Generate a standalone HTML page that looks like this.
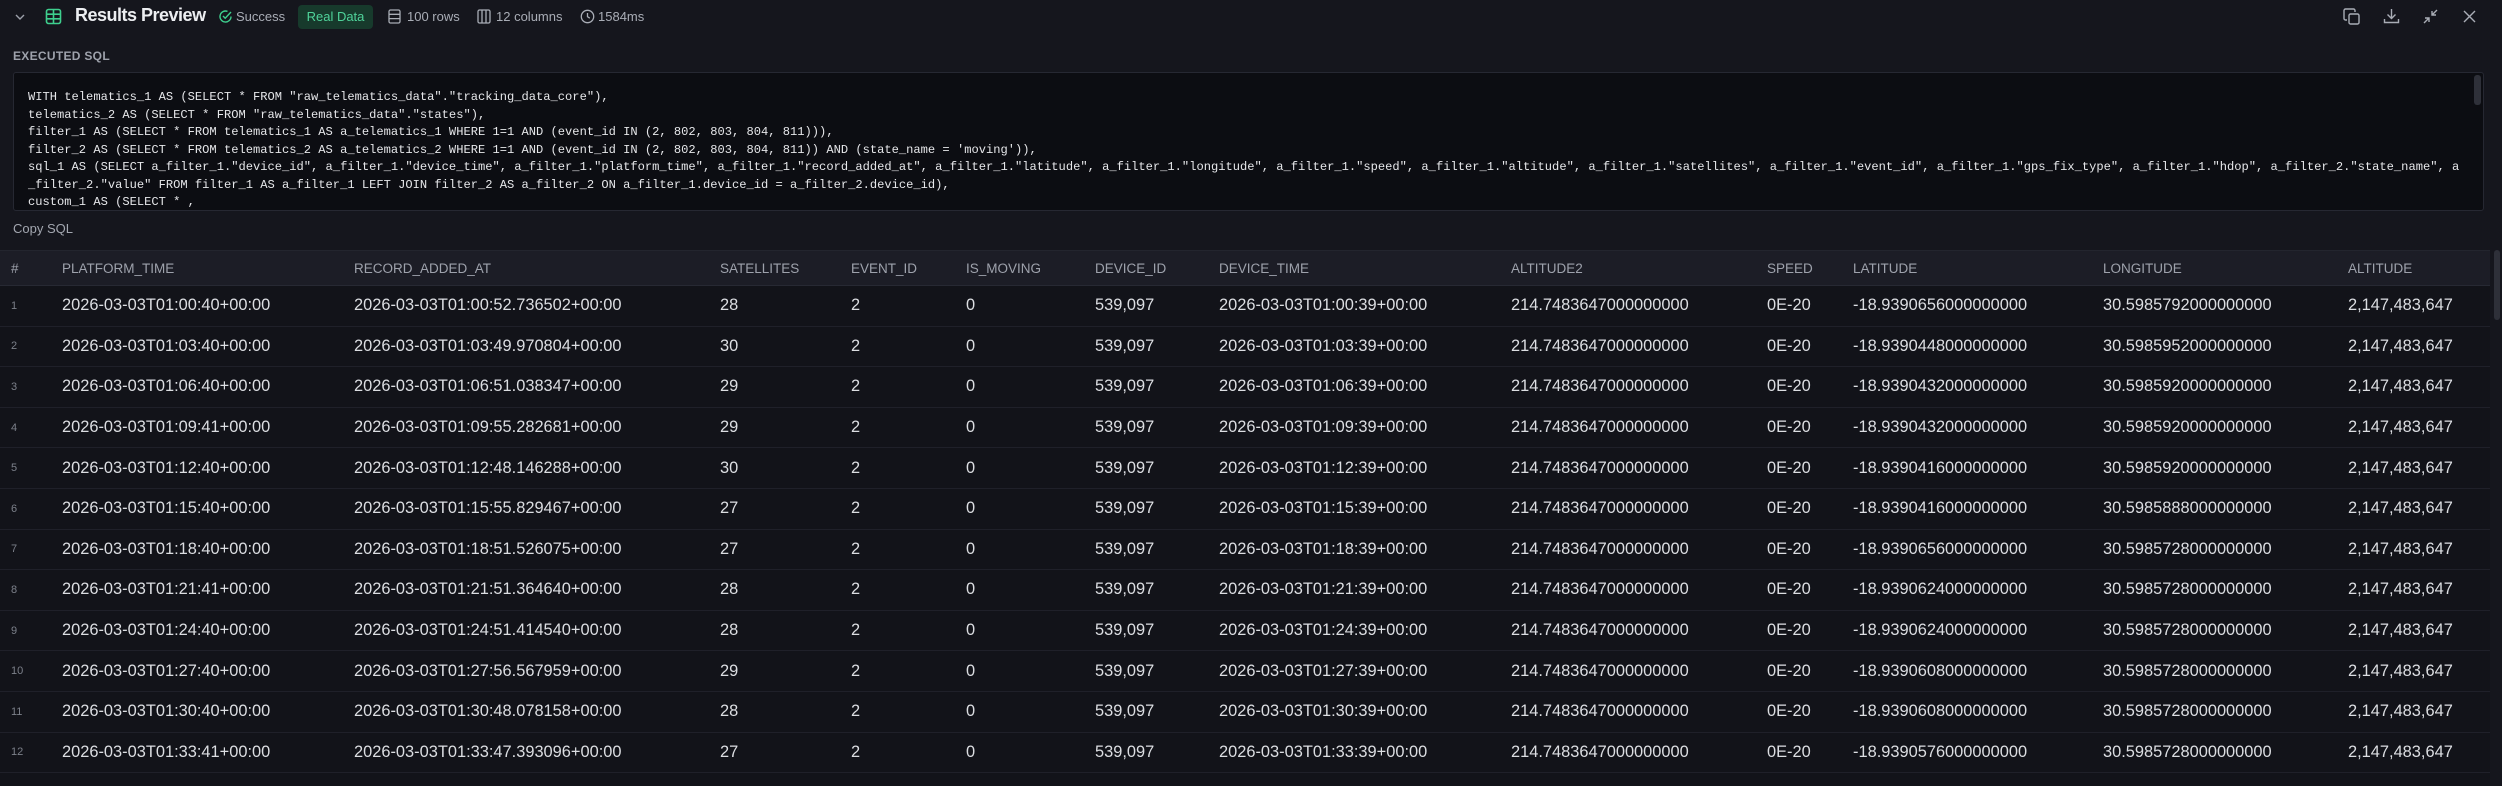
<!DOCTYPE html>
<html><head><meta charset="utf-8"><style>
*{box-sizing:border-box;margin:0;padding:0}
body{width:2502px;height:786px;background:#15161d;color:#d9dbe0;font-family:"Liberation Sans",sans-serif;overflow:hidden;position:relative}
.a{position:absolute;white-space:nowrap}
.hdr{font-size:13px;color:#a9adb6;top:8px;line-height:17px}
svg{position:absolute}
.sql{position:absolute;left:13px;top:72px;width:2471px;height:139px;background:#0c0d12;border:1px solid #262832;border-radius:3px}
.sql pre{position:absolute;left:14px;top:16px;font-family:"Liberation Mono",monospace;font-size:12.1px;line-height:17.5px;color:#e6e7ea}
table{position:absolute;left:0;top:250px;width:2490px;border-collapse:collapse;table-layout:fixed;font-size:16.4px}
th{height:35px;background:#1c1d26;text-align:left;font-weight:normal;color:#9ea2ac;font-size:13.5px;border-bottom:1px solid #272933;border-top:1px solid #23252e}
td{height:40.6px;background:#121319;border-bottom:1px solid #1f2029;color:#dcdee2;white-space:nowrap}
th:first-child,td:first-child{padding-left:11px}
td:first-child{font-size:11px;color:#7c808a}
</style></head><body>
<svg style="left:14px;top:11px" width="12" height="12" viewBox="0 0 12 12"><path d="M2 4l4 4 4-4" stroke="#9ca0aa" stroke-width="1.4" fill="none"/></svg>
<svg style="left:45px;top:8px" width="17" height="17" viewBox="0 0 17 17"><rect x="1.5" y="1.5" width="14" height="14" rx="2" stroke="#3ecf8e" stroke-width="1.6" fill="none"/><path d="M1.5 6.2h14M1.5 10.8h14M8.5 1.5v14" stroke="#3ecf8e" stroke-width="1.6"/></svg>
<div class="a" style="left:75px;top:5px;font-size:18px;font-weight:bold;color:#eceef1;letter-spacing:-0.5px">Results Preview</div>
<svg style="left:218px;top:9px" width="15" height="15" viewBox="0 0 15 15"><path d="M13 7.5A5.5 5.5 0 1 1 9.5 2.4" stroke="#3ecf8e" stroke-width="1.4" fill="none"/><path d="M5 7l2.2 2.2L13 3" stroke="#3ecf8e" stroke-width="1.4" fill="none"/></svg>
<div class="a hdr" style="left:236px">Success</div>
<div class="a" style="left:298px;top:5px;width:75px;height:24px;background:#173a2c;border-radius:4px;color:#4fd39a;font-size:13px;line-height:24px;text-align:center">Real Data</div>
<svg style="left:388px;top:9px" width="13" height="15" viewBox="0 0 13 15"><rect x="1" y="1" width="11" height="13" rx="1.5" stroke="#a9adb6" stroke-width="1.3" fill="none"/><path d="M1 5.3h11M1 9.6h11" stroke="#a9adb6" stroke-width="1.3"/></svg>
<div class="a hdr" style="left:407px">100 rows</div>
<svg style="left:477px;top:9px" width="14" height="15" viewBox="0 0 14 15"><rect x="1" y="1" width="12" height="13" rx="1.5" stroke="#a9adb6" stroke-width="1.3" fill="none"/><path d="M5 1v13M9 1v13" stroke="#a9adb6" stroke-width="1.3"/></svg>
<div class="a hdr" style="left:496px">12 columns</div>
<svg style="left:580px;top:9px" width="15" height="15" viewBox="0 0 15 15"><circle cx="7.5" cy="7.5" r="6.2" stroke="#a9adb6" stroke-width="1.3" fill="none"/><path d="M7.5 4v3.7l2.3 1.5" stroke="#a9adb6" stroke-width="1.3" fill="none"/></svg>
<div class="a hdr" style="left:598px">1584ms</div>
<svg style="left:2343px;top:8px" width="17" height="17" viewBox="0 0 17 17"><rect x="6" y="6" width="10" height="10" rx="1.5" stroke="#a9adb6" stroke-width="1.4" fill="none"/><path d="M4 12H2.5A1.5 1.5 0 0 1 1 10.5v-8A1.5 1.5 0 0 1 2.5 1h8A1.5 1.5 0 0 1 12 2.5V4" stroke="#a9adb6" stroke-width="1.4" fill="none"/></svg>
<svg style="left:2383px;top:8px" width="17" height="17" viewBox="0 0 17 17"><path d="M8.5 1v9M4.5 6.5l4 4 4-4M1.5 11v3.5h14V11" stroke="#a9adb6" stroke-width="1.4" fill="none"/></svg>
<svg style="left:2422px;top:8px" width="17" height="17" viewBox="0 0 17 17"><path d="M15 2l-5 5M10 3v4h4M2 15l5-5M3 10h4v4" stroke="#a9adb6" stroke-width="1.4" fill="none"/></svg>
<svg style="left:2462px;top:9px" width="15" height="15" viewBox="0 0 15 15"><path d="M2 2l11 11M13 2L2 13" stroke="#a9adb6" stroke-width="1.4"/></svg>
<div class="a" style="left:13px;top:49px;font-size:12px;font-weight:bold;color:#9ea2ac;letter-spacing:0.3px">EXECUTED SQL</div>
<div class="sql"><pre>WITH telematics_1 AS (SELECT * FROM "raw_telematics_data"."tracking_data_core"),
telematics_2 AS (SELECT * FROM "raw_telematics_data"."states"),
filter_1 AS (SELECT * FROM telematics_1 AS a_telematics_1 WHERE 1=1 AND (event_id IN (2, 802, 803, 804, 811))),
filter_2 AS (SELECT * FROM telematics_2 AS a_telematics_2 WHERE 1=1 AND (event_id IN (2, 802, 803, 804, 811)) AND (state_name = 'moving')),
sql_1 AS (SELECT a_filter_1."device_id", a_filter_1."device_time", a_filter_1."platform_time", a_filter_1."record_added_at", a_filter_1."latitude", a_filter_1."longitude", a_filter_1."speed", a_filter_1."altitude", a_filter_1."satellites", a_filter_1."event_id", a_filter_1."gps_fix_type", a_filter_1."hdop", a_filter_2."state_name", a
_filter_2."value" FROM filter_1 AS a_filter_1 LEFT JOIN filter_2 AS a_filter_2 ON a_filter_1.device_id = a_filter_2.device_id),
custom_1 AS (SELECT * ,</pre>
<div style="position:absolute;right:2px;top:2px;width:7px;height:30px;background:#2e3039;border-radius:3px"></div></div>
<div class="a" style="left:13px;top:221px;font-size:13px;color:#a3a7b0">Copy SQL</div>
<table>
<colgroup><col style="width:62px"><col style="width:292px"><col style="width:366px"><col style="width:131px"><col style="width:115px"><col style="width:129px"><col style="width:124px"><col style="width:292px"><col style="width:256px"><col style="width:86px"><col style="width:250px"><col style="width:245px"><col style="width:142px"></colgroup>
<tr><th>#</th><th>PLATFORM_TIME</th><th>RECORD_ADDED_AT</th><th>SATELLITES</th><th>EVENT_ID</th><th>IS_MOVING</th><th>DEVICE_ID</th><th>DEVICE_TIME</th><th>ALTITUDE2</th><th>SPEED</th><th>LATITUDE</th><th>LONGITUDE</th><th>ALTITUDE</th></tr>
<tr><td>1</td><td>2026-03-03T01:00:40+00:00</td><td>2026-03-03T01:00:52.736502+00:00</td><td>28</td><td>2</td><td>0</td><td>539,097</td><td>2026-03-03T01:00:39+00:00</td><td>214.7483647000000000</td><td>0E-20</td><td>-18.9390656000000000</td><td>30.5985792000000000</td><td>2,147,483,647</td></tr>
<tr><td>2</td><td>2026-03-03T01:03:40+00:00</td><td>2026-03-03T01:03:49.970804+00:00</td><td>30</td><td>2</td><td>0</td><td>539,097</td><td>2026-03-03T01:03:39+00:00</td><td>214.7483647000000000</td><td>0E-20</td><td>-18.9390448000000000</td><td>30.5985952000000000</td><td>2,147,483,647</td></tr>
<tr><td>3</td><td>2026-03-03T01:06:40+00:00</td><td>2026-03-03T01:06:51.038347+00:00</td><td>29</td><td>2</td><td>0</td><td>539,097</td><td>2026-03-03T01:06:39+00:00</td><td>214.7483647000000000</td><td>0E-20</td><td>-18.9390432000000000</td><td>30.5985920000000000</td><td>2,147,483,647</td></tr>
<tr><td>4</td><td>2026-03-03T01:09:41+00:00</td><td>2026-03-03T01:09:55.282681+00:00</td><td>29</td><td>2</td><td>0</td><td>539,097</td><td>2026-03-03T01:09:39+00:00</td><td>214.7483647000000000</td><td>0E-20</td><td>-18.9390432000000000</td><td>30.5985920000000000</td><td>2,147,483,647</td></tr>
<tr><td>5</td><td>2026-03-03T01:12:40+00:00</td><td>2026-03-03T01:12:48.146288+00:00</td><td>30</td><td>2</td><td>0</td><td>539,097</td><td>2026-03-03T01:12:39+00:00</td><td>214.7483647000000000</td><td>0E-20</td><td>-18.9390416000000000</td><td>30.5985920000000000</td><td>2,147,483,647</td></tr>
<tr><td>6</td><td>2026-03-03T01:15:40+00:00</td><td>2026-03-03T01:15:55.829467+00:00</td><td>27</td><td>2</td><td>0</td><td>539,097</td><td>2026-03-03T01:15:39+00:00</td><td>214.7483647000000000</td><td>0E-20</td><td>-18.9390416000000000</td><td>30.5985888000000000</td><td>2,147,483,647</td></tr>
<tr><td>7</td><td>2026-03-03T01:18:40+00:00</td><td>2026-03-03T01:18:51.526075+00:00</td><td>27</td><td>2</td><td>0</td><td>539,097</td><td>2026-03-03T01:18:39+00:00</td><td>214.7483647000000000</td><td>0E-20</td><td>-18.9390656000000000</td><td>30.5985728000000000</td><td>2,147,483,647</td></tr>
<tr><td>8</td><td>2026-03-03T01:21:41+00:00</td><td>2026-03-03T01:21:51.364640+00:00</td><td>28</td><td>2</td><td>0</td><td>539,097</td><td>2026-03-03T01:21:39+00:00</td><td>214.7483647000000000</td><td>0E-20</td><td>-18.9390624000000000</td><td>30.5985728000000000</td><td>2,147,483,647</td></tr>
<tr><td>9</td><td>2026-03-03T01:24:40+00:00</td><td>2026-03-03T01:24:51.414540+00:00</td><td>28</td><td>2</td><td>0</td><td>539,097</td><td>2026-03-03T01:24:39+00:00</td><td>214.7483647000000000</td><td>0E-20</td><td>-18.9390624000000000</td><td>30.5985728000000000</td><td>2,147,483,647</td></tr>
<tr><td>10</td><td>2026-03-03T01:27:40+00:00</td><td>2026-03-03T01:27:56.567959+00:00</td><td>29</td><td>2</td><td>0</td><td>539,097</td><td>2026-03-03T01:27:39+00:00</td><td>214.7483647000000000</td><td>0E-20</td><td>-18.9390608000000000</td><td>30.5985728000000000</td><td>2,147,483,647</td></tr>
<tr><td>11</td><td>2026-03-03T01:30:40+00:00</td><td>2026-03-03T01:30:48.078158+00:00</td><td>28</td><td>2</td><td>0</td><td>539,097</td><td>2026-03-03T01:30:39+00:00</td><td>214.7483647000000000</td><td>0E-20</td><td>-18.9390608000000000</td><td>30.5985728000000000</td><td>2,147,483,647</td></tr>
<tr><td>12</td><td>2026-03-03T01:33:41+00:00</td><td>2026-03-03T01:33:47.393096+00:00</td><td>27</td><td>2</td><td>0</td><td>539,097</td><td>2026-03-03T01:33:39+00:00</td><td>214.7483647000000000</td><td>0E-20</td><td>-18.9390576000000000</td><td>30.5985728000000000</td><td>2,147,483,647</td></tr>
</table>
<div class="a" style="left:2490px;top:250px;width:12px;height:536px;background:#15161d"></div>
<div class="a" style="left:2494px;top:250px;width:6px;height:70px;background:#2e3039;border-radius:3px"></div>
<div class="a" style="left:0;top:773px;width:2490px;height:13px;background:#121319"></div>
</body></html>
